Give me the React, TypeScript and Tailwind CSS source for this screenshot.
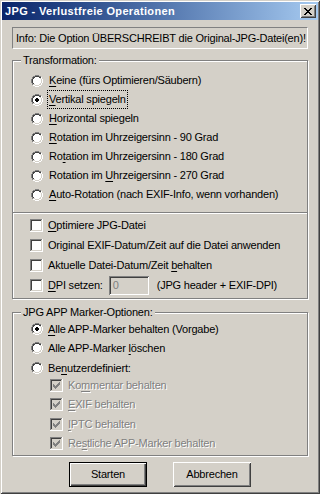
import React from "react";

const COLORS: Record<string, string> = {
  G: "#808080",
  D: "#404040",
  L: "#d4d0c8",
  W: "#ffffff",
  w: "#ffffff",
  K: "#000000",
};

function Pix({ map, colors }: { map: string[]; colors: Record<string, string> }) {
  const w = map[0].length;
  const h = map.length;
  const rects: React.ReactElement[] = [];
  map.forEach((row, y) => {
    for (let x = 0; x < row.length; x++) {
      const c = colors[row[x]];
      if (c) rects.push(<rect key={`${x}-${y}`} x={x} y={y} width={1} height={1} fill={c} />);
    }
  });
  return (
    <svg width={w} height={h} viewBox={`0 0 ${w} ${h}`} shapeRendering="crispEdges" className="block shrink-0">
      {rects}
    </svg>
  );
}

const RADIO = [
  "....GGGG....",
  "..GGDDDDGG..",
  ".GDDwwwwDDW.",
  ".GDwwwwwwLW.",
  "GDwwwwwwwwLW",
  "GDwwwwwwwwLW",
  "GDwwwwwwwwLW",
  "GDwwwwwwwwLW",
  ".GDwwwwwwLW.",
  ".GLLwwwwLLW.",
  "..WWLLLLWW..",
  "....WWWW....",
];

const RADIO_ON = RADIO.map((row, y) => {
  const dot = ["", "", "", "", ".KK.", "KKKK", "KKKK", ".KK.", "", "", "", ""][y];
  if (!dot) return row;
  const r = row.split("");
  for (let i = 0; i < 4; i++) if (dot[i] === "K") r[4 + i] = "K";
  return r.join("");
});

const CHECK = [
  "......X",
  ".....XX",
  "X...XXX",
  "XX.XXX.",
  "XXXXX..",
  ".XXX...",
  "..X....",
];

function checkboxMap(checked: boolean, disabled: boolean) {
  const fill = disabled ? "L" : "w";
  const rows: string[] = [];
  for (let y = 0; y < 13; y++) {
    let r = "";
    for (let x = 0; x < 13; x++) {
      let c: string;
      if (y === 12 || x === 12) c = "W";
      else if (y === 0 || x === 0) c = "G";
      else if (y === 11 || x === 11) c = "L";
      else if (y === 1 || x === 1) c = "D";
      else c = fill;
      if (checked && y >= 3 && y <= 9 && x >= 3 && x <= 9 && CHECK[y - 3][x - 3] === "X") c = disabled ? "G" : "K";
      r += c;
    }
    rows.push(r);
  }
  return rows;
}

const CLOSE = [
  "XX....XX",
  ".XX..XX.",
  "..XXXX..",
  "...XX...",
  "..XXXX..",
  ".XX..XX.",
  "XX....XX",
];

function Label({ text, disabled }: { text: string; disabled?: boolean }) {
  const i = text.indexOf("&");
  const content =
    i < 0 ? (
      text
    ) : (
      <>
        {text.slice(0, i)}
        <span className="underline underline-offset-[2px]">{text[i + 1]}</span>
        {text.slice(i + 2)}
      </>
    );
  return (
    <span
      className={
        "whitespace-nowrap leading-[13px] " +
        (disabled ? "text-[#808080] [text-shadow:1px_1px_0_#ffffff]" : "text-black")
      }
    >
      {content}
    </span>
  );
}

function Radio({ text, on, focus }: { text: string; on?: boolean; focus?: boolean }) {
  return (
    <div className="h-[19px] flex items-center gap-[4px]">
      <Pix map={on ? RADIO_ON : RADIO} colors={COLORS} />
      <span className={"px-[1px] " + (focus ? "border border-dotted border-black" : "border border-transparent")}>
        <Label text={text} />
      </span>
    </div>
  );
}

function Check({ text, checked, disabled, h = "h-[20px]" }: { text: string; checked?: boolean; disabled?: boolean; h?: string }) {
  return (
    <div className={h + " flex items-center gap-[5px]"}>
      <Pix map={checkboxMap(!!checked, !!disabled)} colors={{ ...COLORS, X: "#000" }} />
      <Label text={text} disabled={disabled} />
    </div>
  );
}

function Group({ title, className, children }: { title: string; className: string; children: React.ReactNode }) {
  return (
    <div className={"relative border border-[#808080] shadow-[inset_1px_1px_0_#ffffff,1px_1px_0_#ffffff] " + className}>
      <span className="absolute top-[-7px] left-[8px] px-[2px] bg-[#d4d0c8] leading-[13px] whitespace-nowrap">{title}</span>
      {children}
    </div>
  );
}

const bevelBtn =
  "shadow-[inset_1px_1px_0_#ffffff,inset_-1px_-1px_0_#404040,inset_2px_2px_0_#d4d0c8,inset_-2px_-2px_0_#808080]";

export default function App() {
  return (
    <div
      className="w-[320px] h-[494px] bg-[#d4d0c8] p-[2px] flex flex-col text-[11px] tracking-[-0.2px] text-black shadow-[inset_1px_1px_0_#d4d0c8,inset_-1px_-1px_0_#404040,inset_2px_2px_0_#ffffff,inset_-2px_-2px_0_#808080]"
      style={{ fontFamily: "'Liberation Sans', Arial, sans-serif" }}
    >
      {/* Title bar */}
      <div className="h-[18px] shrink-0 flex items-center justify-between bg-linear-to-r from-[#0a246a] to-[#a6caf0] pl-[3px] pr-[2px]">
        <span className="text-white font-bold text-[11px] tracking-[0.35px] leading-[13px] whitespace-nowrap">JPG - Verlustfreie Operationen</span>
        <div className={"w-[16px] h-[14px] bg-[#d4d0c8] flex items-center justify-center " + bevelBtn}>
          <Pix map={CLOSE} colors={{ X: "#000000" }} />
        </div>
      </div>

      <div className="flex flex-col px-[10px]">
        {/* Info */}
        <div className="mt-[7px] h-[22px] border border-t-[#808080] border-l-[#808080] border-b-white border-r-white flex items-center pl-[3px]">
          <span className="whitespace-nowrap leading-[13px]">Info: Die Option ÜBERSCHREIBT die Original-JPG-Datei(en)!</span>
        </div>

        {/* Transformation */}
        <Group title="Transformation:" className="mt-[11px] h-[239px]">
          <div className="flex flex-col pt-[10px] pl-[18px]">
            <Radio text="&Keine (fürs Optimieren/Säubern)" />
            <Radio text="&Vertikal spiegeln" on focus />
            <Radio text="&Horizontal spiegeln" />
            <Radio text="&Rotation im Uhrzeigersinn - 90 Grad" />
            <Radio text="Ro&tation im Uhrzeigersinn - 180 Grad" />
            <Radio text="Rotation im &Uhrzeigersinn - 270 Grad" />
            <Radio text="&Auto-Rotation (nach EXIF-Info, wenn vorhanden)" />
          </div>
          <div className="mt-[8px] h-[2px] border-t border-t-[#808080] border-b border-b-white" />
          <div className="flex flex-col pt-[1px] pl-[17px]">
            <Check text="&Optimiere JPG-Datei" />
            <Check text="Original EXIF-Datum/Zeit auf die Datei anwenden" />
            <Check text="Aktuelle Datei-Datum/Zeit &behalten" />
            <div className="h-[20px] flex items-center">
              <Check text="&DPI setzen:" />
              <div className="ml-[6px] w-[40px] h-[19px] bg-[#d4d0c8] flex items-center pl-[4px] shadow-[inset_1px_1px_0_#808080,inset_-1px_-1px_0_#ffffff,inset_2px_2px_0_#404040,inset_-2px_-2px_0_#d4d0c8]">
                <span className="text-[#808080] leading-[13px]">0</span>
              </div>
              <span className="ml-[8px] whitespace-nowrap leading-[13px]">(JPG header + EXIF-DPI)</span>
            </div>
          </div>
        </Group>

        {/* APP Marker */}
        <Group title="JPG APP Marker-Optionen:" className="mt-[13px] h-[144px]">
          <div className="flex flex-col pt-[6px] pl-[18px]">
            <div className="h-[19.5px] flex items-center gap-[4px]">
              <Pix map={RADIO_ON} colors={COLORS} />
              <span className="px-[1px]"><Label text="&Alle APP-Marker behalten (Vorgabe)" /></span>
            </div>
            <div className="h-[19.5px] flex items-center gap-[4px]">
              <Pix map={RADIO} colors={COLORS} />
              <span className="px-[1px]"><Label text="Alle APP-Marker &löschen" /></span>
            </div>
            <div className="h-[19.5px] flex items-center gap-[4px]">
              <Pix map={RADIO} colors={COLORS} />
              <span className="px-[1px]"><Label text="Be&nutzerdefiniert:" /></span>
            </div>
          </div>
          <div className="flex flex-col -mt-[2px] pl-[37px]">
            <Check text="Ko&mmentar behalten" checked disabled h="h-[19.5px]" />
            <Check text="&EXIF behalten" checked disabled h="h-[19.5px]" />
            <Check text="&IPTC behalten" checked disabled h="h-[19.5px]" />
            <Check text="Re&stliche APP-Marker behalten" checked disabled h="h-[19.5px]" />
          </div>
        </Group>

        {/* Buttons */}
        <div className="mt-[6px] flex justify-center gap-[26px]">
          <div className="w-[78px] h-[25px] border border-black flex items-center justify-center shadow-[inset_1px_1px_0_#ffffff,inset_-1px_-1px_0_#404040,inset_-2px_-2px_0_#808080]">
            <span className="leading-[13px]">Starten</span>
          </div>
          <div className={"w-[78px] h-[25px] flex items-center justify-center " + bevelBtn}>
            <span className="leading-[13px]">Abbrechen</span>
          </div>
        </div>
      </div>
    </div>
  );
}
